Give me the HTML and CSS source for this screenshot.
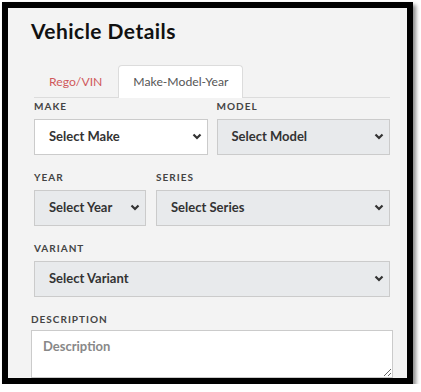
FILE: index.html
```html
<!DOCTYPE html>
<html>
<head>
<meta charset="utf-8">
<link rel="stylesheet" href="styles.css">
</head>
<body>
<div class="frame">
  <div class="panel">
    <h1 class="title">Vehicle Details</h1>
    <div class="form">
      <div class="tabs">
        <div class="tab tab-link">Rego/VIN</div>
        <div class="tab tab-active">Make-Model-Year</div>
      </div>
      <div class="row row-half">
        <div class="group">
          <div class="label">MAKE</div>
          <div class="select select-white"><span>Select Make</span><svg class="chev" width="10" height="7" viewBox="0 0 10 7"><path d="M1.5 1.5 L5 5 L8.5 1.5" fill="none" stroke="#333" stroke-width="2.2"/></svg></div>
        </div>
        <div class="group">
          <div class="label">MODEL</div>
          <div class="select"><span>Select Model</span><svg class="chev" width="10" height="7" viewBox="0 0 10 7"><path d="M1.5 1.5 L5 5 L8.5 1.5" fill="none" stroke="#333" stroke-width="2.2"/></svg></div>
        </div>
      </div>
      <div class="row row-third">
        <div class="group">
          <div class="label">YEAR</div>
          <div class="select"><span>Select Year</span><svg class="chev" width="10" height="7" viewBox="0 0 10 7"><path d="M1.5 1.5 L5 5 L8.5 1.5" fill="none" stroke="#333" stroke-width="2.2"/></svg></div>
        </div>
        <div class="group">
          <div class="label">SERIES</div>
          <div class="select"><span>Select Series</span><svg class="chev" width="10" height="7" viewBox="0 0 10 7"><path d="M1.5 1.5 L5 5 L8.5 1.5" fill="none" stroke="#333" stroke-width="2.2"/></svg></div>
        </div>
      </div>
      <div class="row">
        <div class="group">
          <div class="label">VARIANT</div>
          <div class="select"><span>Select Variant</span><svg class="chev" width="10" height="7" viewBox="0 0 10 7"><path d="M1.5 1.5 L5 5 L8.5 1.5" fill="none" stroke="#333" stroke-width="2.2"/></svg></div>
        </div>
      </div>
    </div>
    <div class="desc">
      <div class="label">DESCRIPTION</div>
      <textarea class="textarea" placeholder="Description"></textarea>
    </div>
  </div>
</div>
</body>
</html>
```

FILE: styles.css
```css
html, body {
  margin: 0;
  padding: 0;
  background: #ffffff;
}
body {
  font-family: "Lato", "Open Sans", sans-serif;
  color: #333;
}
.frame {
  margin: 2px 0 0 2px;
  width: 399px;
  height: 370px;
  border: 6px solid #000;
  box-shadow: 3px 3px 4px rgba(0, 0, 0, 0.45);
  background: #f3f3f3;
  overflow: hidden;
}
.panel {
  padding: 10px 14px 0 23px;
}
.title {
  margin: 0;
  font-size: 21px;
  line-height: 25px;
  font-weight: 700;
  letter-spacing: 0.45px;
  color: #111;
}
.form {
  margin: 22px 3px 0 3px;
}
.tabs {
  display: flex;
  gap: 1px;
  border-bottom: 1px solid #dcdcdc;
  height: 32px;
}
.tab {
  padding: 0 15px;
  font-size: 12.2px;
  line-height: 33px;
  height: 32px;
  box-sizing: border-box;
}
.tab-link {
  color: #d0595b;
}
.tab-active {
  color: #555;
  background: #fff;
  border: 1px solid #dcdcdc;
  border-bottom: none;
  border-radius: 4px 4px 0 0;
  height: 33px;
  padding: 0 14px;
  line-height: 32px;
}
.row {
  display: grid;
  grid-template-columns: 1fr;
  column-gap: 10px;
  margin-top: 15px;
}
.row-half {
  grid-template-columns: 1fr 1fr;
  column-gap: 9px;
  margin-top: 1px;
}
.row-third {
  grid-template-columns: 112px 1fr;
}
.label {
  font-size: 10px;
  line-height: 14px;
  font-weight: 700;
  letter-spacing: 1px;
  color: #444;
  margin-bottom: 6px;
}
.select {
  height: 36px;
  box-sizing: border-box;
  border: 1px solid #cbcbcb;
  background: #e8eaec;
  display: flex;
  align-items: center;
  justify-content: space-between;
  padding: 0 5px 2px 14px;
  font-size: 13px;
  font-weight: 700;
  color: #333;
}
.select-white {
  background: #fff;
}
.chev {
  display: block;
}
.desc {
  margin-top: 15px;
}
.desc .label {
  margin-bottom: 4px;
}
.textarea {
  display: block;
  width: 100%;
  height: 48px;
  box-sizing: border-box;
  border: 1px solid #cbcbcb;
  background: #fff;
  margin: 0;
  padding: 7px 11px;
  font-family: "Lato", "Open Sans", sans-serif;
  font-size: 13px;
  font-weight: 700;
  color: #333;
}
.textarea::placeholder {
  color: #888;
}
```
